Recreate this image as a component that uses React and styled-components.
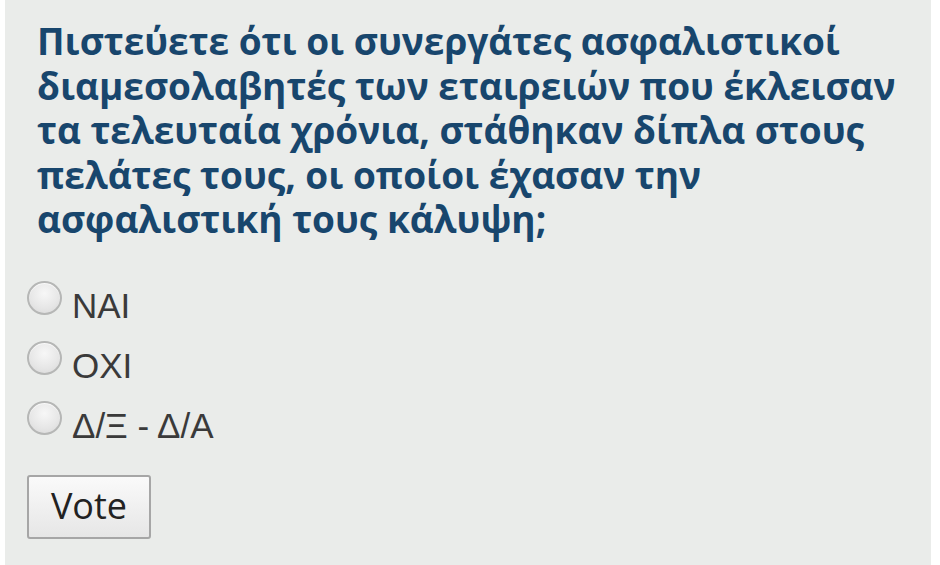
import React from "react";
import styled, { createGlobalStyle } from "styled-components";

const Global = createGlobalStyle`
  html, body { margin: 0; padding: 0; background: #ffffff; }
  body { font-family: "Open Sans", "Noto Sans", sans-serif; }
`;

const Panel = styled.div`
  margin-left: 5px;
  width: 926px;
  height: 565px;
  box-sizing: border-box;
  background: #eaecea;
  padding: 19px 10px 0 22px;
  display: flex;
  flex-direction: column;
`;

const Question = styled.h2`
  margin: 0 0 0 10px;
  max-width: 875px;
  font-family: "Open Sans", "Noto Sans", sans-serif;
  font-weight: 700;
  font-size: 37px;
  line-height: 44.5px;
  color: #18466d;
`;

const Options = styled.div`
  margin-top: 46px;
  display: flex;
  flex-direction: column;
  gap: 24px;
`;

const Option = styled.label`
  display: flex;
  align-items: flex-start;
  gap: 10px;
  height: 36px;
  line-height: 36px;
  font-size: 35px;
  color: #3a3a3a;
  font-family: "Liberation Sans", Arial, sans-serif;
`;

const Radio = styled.span`
  width: 35px;
  height: 34px;
  margin-top: -7px;
  box-sizing: border-box;
  border-radius: 50%;
  border: 2px solid #b6b7b6;
  background: radial-gradient(circle at 50% 35%, #f7f7f7 0%, #e6e6e6 60%, #d6d6d6 100%);
  box-shadow: inset 0 1px 1px rgba(255, 255, 255, 0.8);
  flex: none;
`;

const Button = styled.button`
  margin-top: 31px;
  align-self: flex-start;
  width: 124px;
  height: 64px;
  box-sizing: border-box;
  border: 2px solid #a6a6a6;
  border-radius: 3px;
  background: linear-gradient(#fafafa, #e6e6e6);
  font-family: "Open Sans", "Noto Sans", sans-serif;
  font-size: 36px;
  color: #222222;
  padding: 0 0 2px 0;
`;

export default function App() {
  const opts = ["ΝΑΙ", "ΟΧΙ", "Δ/Ξ - Δ/Α"];
  return (
    <>
      <Global />
      <Panel>
        <Question>
          Πιστεύετε ότι οι συνεργάτες ασφαλιστικοί διαμεσολαβητές των εταιρειών που έκλεισαν τα τελευταία χρόνια, στάθηκαν δίπλα στους πελάτες τους, οι οποίοι έχασαν την ασφαλιστική τους κάλυψη;
        </Question>
        <Options>
          {opts.map((o) => (
            <Option key={o}>
              <Radio />
              {o}
            </Option>
          ))}
        </Options>
        <Button>Vote</Button>
      </Panel>
    </>
  );
}
